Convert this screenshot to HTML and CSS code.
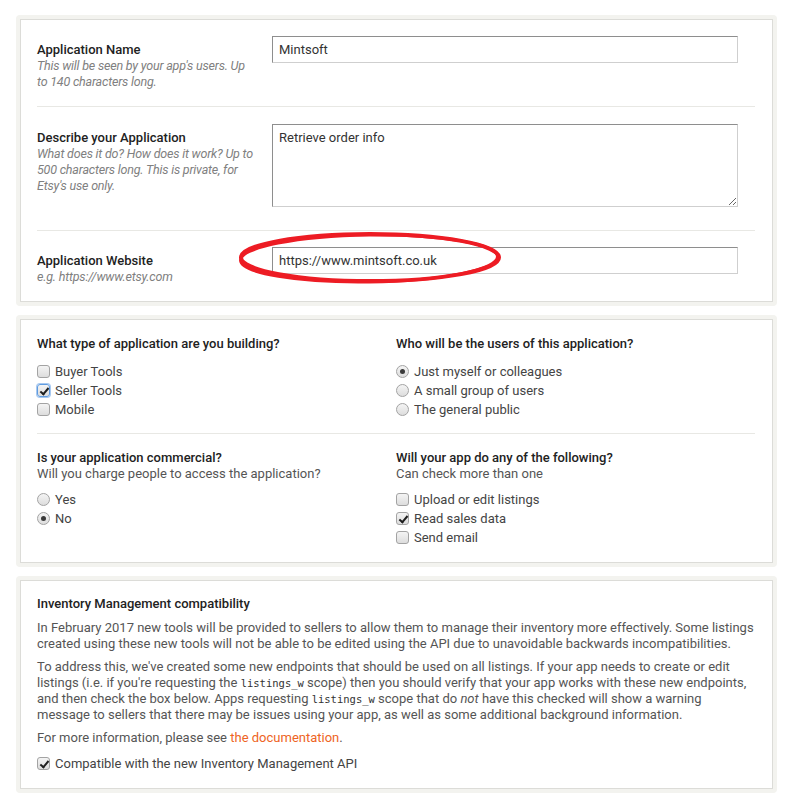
FILE: index.html
```html
<!DOCTYPE html>
<html lang="en">
<head>
<meta charset="utf-8">
<title>Application details</title>
<link rel="stylesheet" href="styles.css">
</head>
<body>
<div class="page">

  <section class="panel">
    <div class="panel-inner">
      <div class="field-row">
        <div class="field-label">
          <div class="label-title">Application Name</div>
          <div class="label-help">This will be seen by your app's users. Up to 140 characters long.</div>
        </div>
        <div class="field-control">
          <input class="text-input" type="text" value="Mintsoft">
        </div>
      </div>
      <div class="field-row field-row-tall">
        <div class="field-label">
          <div class="label-title">Describe your Application</div>
          <div class="label-help">What does it do? How does it work? Up to 500 characters long. This is private, for Etsy's use only.</div>
        </div>
        <div class="field-control">
          <textarea class="text-area">Retrieve order info</textarea>
        </div>
      </div>
      <div class="field-row">
        <div class="field-label">
          <div class="label-title">Application Website</div>
          <div class="label-help">e.g. https://www.etsy.com</div>
        </div>
        <div class="field-control input-wrap">
          <input class="text-input" type="text" value="https://www.mintsoft.co.uk">
          <svg class="annotation" viewBox="0 0 266 56" width="266" height="56" aria-hidden="true">
            <ellipse cx="132" cy="27.5" rx="129" ry="23.5" fill="none" stroke="#ed1c24" stroke-width="4"/>
            <ellipse cx="131" cy="28.5" rx="128.5" ry="23.5" fill="none" stroke="#ed1c24" stroke-width="3" transform="rotate(-0.8 131 28)"/>
          </svg>
        </div>
      </div>
    </div>
  </section>

  <section class="panel">
    <div class="panel-inner">
      <div class="q-row q-row-divided">
        <div class="q-block">
          <div class="q-title">What type of application are you building?</div>
          <div class="choice-list">
            <label class="choice"><input class="cb" type="checkbox">Buyer Tools</label>
            <label class="choice"><input class="cb cb-focus" type="checkbox" checked>Seller Tools</label>
            <label class="choice"><input class="cb" type="checkbox">Mobile</label>
          </div>
        </div>
        <div class="q-block">
          <div class="q-title">Who will be the users of this application?</div>
          <div class="choice-list">
            <label class="choice"><input class="rb" type="radio" name="users" checked>Just myself or colleagues</label>
            <label class="choice"><input class="rb" type="radio" name="users">A small group of users</label>
            <label class="choice"><input class="rb" type="radio" name="users">The general public</label>
          </div>
        </div>
      </div>
      <div class="q-row q-row-last">
        <div class="q-block">
          <div class="q-title">Is your application commercial?</div>
          <div class="q-sub">Will you charge people to access the application?</div>
          <div class="choice-list choice-list-sub">
            <label class="choice"><input class="rb" type="radio" name="commercial">Yes</label>
            <label class="choice"><input class="rb" type="radio" name="commercial" checked>No</label>
          </div>
        </div>
        <div class="q-block">
          <div class="q-title">Will your app do any of the following?</div>
          <div class="q-sub">Can check more than one</div>
          <div class="choice-list choice-list-sub">
            <label class="choice"><input class="cb" type="checkbox">Upload or edit listings</label>
            <label class="choice"><input class="cb" type="checkbox" checked>Read sales data</label>
            <label class="choice"><input class="cb" type="checkbox">Send email</label>
          </div>
        </div>
      </div>
    </div>
  </section>

  <section class="panel">
    <div class="panel-inner">
      <div class="info">
        <h3 class="info-title">Inventory Management compatibility</h3>
        <p class="info-text">In February 2017 new tools will be provided to sellers to allow them to manage their inventory more effectively. Some listings created using these new tools will not be able to be edited using the API due to unavoidable backwards incompatibilities.</p>
        <p class="info-text">To address this, we've created some new endpoints that should be used on all listings. If your app needs to create or edit listings (i.e. if you're requesting the <code class="code">listings_w</code> scope) then you should verify that your app works with these new endpoints, and then check the box below. Apps requesting <code class="code">listings_w</code> scope that do <em>not</em> have this checked will show a warning message to sellers that there may be issues using your app, as well as some additional background information.</p>
        <p class="info-text">For more information, please see <a class="link" href="#">the documentation</a>.</p>
        <label class="choice info-check"><input class="cb" type="checkbox" checked>Compatible with the new Inventory Management API</label>
      </div>
    </div>
  </section>

</div>
</body>
</html>
```

FILE: styles.css
```css
* {
  box-sizing: border-box;
}

body {
  margin: 0;
  background: #ffffff;
  font-family: Roboto, "Liberation Sans", Arial, sans-serif;
  font-size: 13px;
  line-height: 16px;
  color: #444444;
}

.page {
  padding: 15px 16px;
}

.panel {
  background: #f3f3ef;
  padding: 4px;
  border-radius: 4px;
  margin-bottom: 9px;
}

.panel-inner {
  background: #ffffff;
  border: 1px solid #dcdcd8;
  padding: 0 17px 0 16px;
}

/* ---------- panel 1: text fields ---------- */

.field-row {
  display: grid;
  grid-template-columns: 218px 466px;
  column-gap: 17px;
  padding: 16px 0;
  border-bottom: 1px solid #e8e8e4;
}

.field-row:last-child {
  border-bottom: 0;
}

.field-row-tall {
  padding-top: 17px;
}

.field-label {
  padding-top: 6px;
}

.label-title {
  font-weight: 500;
  color: #222222;
}

.label-help {
  font-style: italic;
  font-size: 12.5px;
  letter-spacing: -0.2px;
  color: #808080;
}

.text-input {
  display: block;
  width: 100%;
  height: 27px;
  margin: 0;
  border: 1px solid;
  border-color: #8e8e8e #cfcfcf #cfcfcf #8e8e8e;
  padding: 0 6px;
  font: inherit;
  color: #333333;
  background: #ffffff;
  outline: none;
}

.text-area {
  display: block;
  width: 100%;
  height: 83px;
  margin: 0 0 7px;
  border: 1px solid;
  border-color: #8e8e8e #cfcfcf #cfcfcf #8e8e8e;
  padding: 5px 6px;
  font: inherit;
  color: #333333;
  resize: both;
  outline: none;
}

.input-wrap {
  position: relative;
}

.annotation {
  position: absolute;
  left: -34px;
  top: -17px;
  overflow: visible;
  pointer-events: none;
}

/* ---------- panel 2: choices ---------- */

.q-row {
  display: grid;
  grid-template-columns: 359px 1fr;
}

.q-row-divided {
  border-bottom: 1px solid #e8e8e4;
}

.q-block {
  padding: 16px 0 14px;
}

.q-row-last .q-block {
  padding-bottom: 15px;
}

.q-title {
  font-weight: 500;
  color: #222222;
}

.q-sub {
  color: #555555;
}

.choice-list {
  margin-top: 10px;
}

.choice-list-sub {
  margin-top: 8px;
}

.choice {
  display: flex;
  align-items: center;
  height: 19px;
  color: #444444;
}

.cb,
.rb {
  -webkit-appearance: none;
  appearance: none;
  position: relative;
  flex: none;
  width: 13px;
  height: 13px;
  margin: 0 5px 0 0;
  border: 1px solid #a3a3a3;
  background: linear-gradient(#f4f4f4, #dddddd);
}

.cb {
  border-radius: 3px;
}

.cb:checked::after {
  content: "";
  position: absolute;
  left: 3.5px;
  top: 0.5px;
  width: 3px;
  height: 7px;
  border: solid #1e1e1e;
  border-width: 0 2.5px 2.5px 0;
  transform: rotate(40deg);
}

.cb-focus {
  border-color: #5f9be0;
  box-shadow: 0 0 0 1px #a8c9f0;
}

.rb {
  border-radius: 50%;
}

.rb:checked::after {
  content: "";
  position: absolute;
  left: 3px;
  top: 3px;
  width: 5px;
  height: 5px;
  border-radius: 50%;
  background: #3a3a3a;
}

/* ---------- panel 3: info ---------- */

.info {
  padding: 15px 0;
}

.info-title {
  margin: 0;
  font-size: 13px;
  line-height: 16px;
  font-weight: 500;
  color: #222222;
}

.info-text {
  margin: 7px 0 0;
  color: #555555;
}

.info-title + .info-text {
  margin-top: 8px;
}

.code {
  font-family: "DejaVu Sans Mono", "Liberation Mono", monospace;
  font-size: 10.5px;
  line-height: 1;
  color: #333333;
}

.link {
  color: #ee6424;
  text-decoration: none;
}

.info-check {
  margin-top: 8px;
}
```
